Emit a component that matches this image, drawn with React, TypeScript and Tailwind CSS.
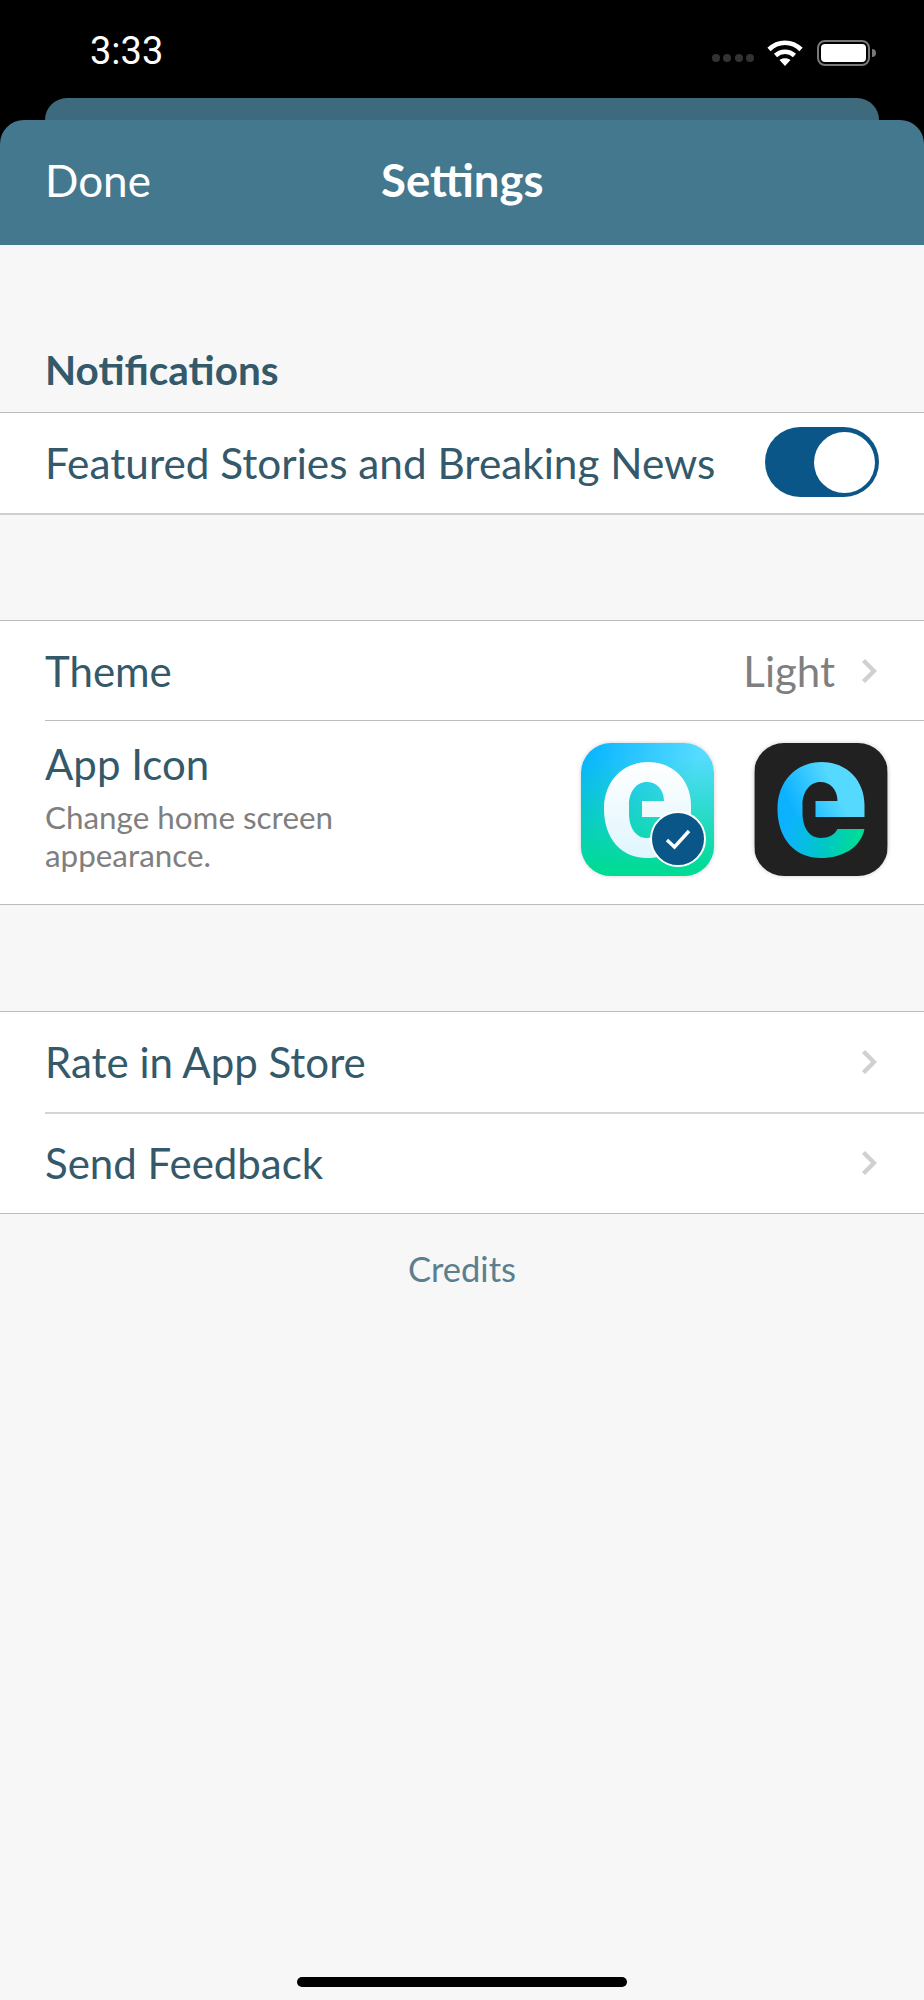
const lato = "font-['Lato',sans-serif]";

const LETTER =
  "M110 74 L61 74 L61 58 L83 58 C83 46 75 39 66 39 C55 39 48 49 48 62 L48 70 C48 85 55 95 66 95 C74 95 80 92 83 86 L110 86 C106 105 88 115 66 115 C40 115 23 95 23 66 C23 38 42 19 67 19 C93 19 110 38 110 62 Z";

function StatusIcons() {
  return (
    <div className="flex items-center pt-[3px]">
      <div className="mt-[11px] flex gap-[3.5px]">
        <span className="h-2 w-2 rounded-full bg-[#333]" />
        <span className="h-2 w-2 rounded-full bg-[#333]" />
        <span className="h-2 w-2 rounded-full bg-[#333]" />
        <span className="h-2 w-2 rounded-full bg-[#333]" />
      </div>
      <svg className="ml-[13px]" width="36" height="27" viewBox="0 0 36 27" fill="none">
        <path d="M2 10.5 C11 1.5 25 1.5 34 10.5" stroke="#fff" strokeWidth="4.6" />
        <path d="M8.5 16.5 C14 11.5 22 11.5 27.5 16.5" stroke="#fff" strokeWidth="4.6" />
        <path d="M12.5 21 C15.5 18.6 20.5 18.6 23.5 21 L18 27 Z" fill="#fff" />
      </svg>
      <div className="ml-[14px] flex h-[26px] w-[53px] items-center rounded-[8px] border-2 border-[#777] p-[2px]">
        <div className="h-full w-full rounded-[4px] bg-white" />
      </div>
      <div className="ml-[2px] h-2 w-1 rounded-r-full bg-[#777]" />
    </div>
  );
}

function LightIcon() {
  return (
    <div className="relative h-[133px] w-[133px]">
      <svg className="rounded-[30px] shadow-[0_0_4px_rgba(0,0,0,0.2)]" width="133" height="133" viewBox="0 0 133 133">
        <defs>
          <linearGradient id="lightSky" x1="0" y1="0" x2="1" y2="0.25">
            <stop offset="0" stopColor="#03b2ff" />
            <stop offset="0.85" stopColor="#55dbff" />
          </linearGradient>
          <linearGradient id="lightSea" x1="0" y1="0.1" x2="0" y2="0.95">
            <stop offset="0" stopColor="#00db96" stopOpacity="0" />
            <stop offset="1" stopColor="#00db96" />
          </linearGradient>
          <linearGradient id="lightLetter" x1="0" y1="0" x2="0" y2="1">
            <stop offset="0" stopColor="#ffffff" />
            <stop offset="1" stopColor="#dff5fe" />
          </linearGradient>
        </defs>
        <rect width="133" height="133" fill="url(#lightSky)" />
        <rect width="133" height="133" fill="url(#lightSea)" />
        <path d={LETTER} fill="url(#lightLetter)" />
      </svg>
      {/* selected badge */}
      <div className="absolute left-[69px] top-[68px] flex h-[56px] w-[56px] items-center justify-center rounded-full border-2 border-white bg-[#0a5689]">
        <svg width="28" height="24" viewBox="0 0 28 24" fill="none">
          <path d="M3 13 L10.5 20 L25 4" stroke="#fff" strokeWidth="3.4" />
        </svg>
      </div>
    </div>
  );
}

function DarkIcon() {
  return (
    <svg className="rounded-[30px] shadow-[0_0_4px_rgba(0,0,0,0.2)]" width="134" height="133" viewBox="0 0 133 133">
      <defs>
        {/* the bar and bowl fade to light blue, the lower hook fades to green */}
        <linearGradient id="darkUpper" x1="0.05" y1="0.55" x2="0.85" y2="0.15">
          <stop offset="0.15" stopColor="#0db2ff" />
          <stop offset="0.75" stopColor="#55d9ff" />
        </linearGradient>
        <linearGradient id="darkLower" x1="0.05" y1="0.5" x2="1" y2="0.75">
          <stop offset="0.1" stopColor="#0db2ff" />
          <stop offset="0.55" stopColor="#00c6c8" />
          <stop offset="0.95" stopColor="#00dc96" />
        </linearGradient>
        <clipPath id="upperHalf">
          <rect width="133" height="74" />
        </clipPath>
        <clipPath id="lowerHalf">
          <rect y="74" width="133" height="59" />
        </clipPath>
      </defs>
      <rect width="133" height="133" fill="#212121" />
      <path d={LETTER} fill="url(#darkUpper)" clipPath="url(#upperHalf)" />
      <path d={LETTER} fill="url(#darkLower)" clipPath="url(#lowerHalf)" />
    </svg>
  );
}

function Chevron() {
  return (
    <svg width="16" height="26" viewBox="0 0 16 26" fill="none">
      <path d="M2.5 2.5 L13 13 L2.5 23.5" stroke="#d0d0d0" strokeWidth="4.4" />
    </svg>
  );
}

function LinkRow({ label, value }: { label: string; value?: string }) {
  return (
    <div className="flex h-full items-center justify-between pl-[45px] pr-[47px]">
      <span className="text-[42px] leading-none text-[#33596b]">{label}</span>
      <div className="flex items-center gap-[26px]">
        {value && <span className="text-[42px] leading-none text-[#7f7f7f]">{value}</span>}
        <Chevron />
      </div>
    </div>
  );
}

export default function App() {
  return (
    <div className={`${lato} flex h-[2000px] w-[924px] flex-col bg-[#f7f7f7]`}>
      {/* status bar + stacked sheet */}
      <div className="bg-black">
        <div className="flex h-[98px] items-start justify-between pl-[90px] pr-[48px] pt-[36px]">
          <span className="font-['Roboto',sans-serif] text-[38px] font-normal leading-[30px] text-white">3:33</span>
          <StatusIcons />
        </div>
        <div className="mx-[45px] h-[22px] rounded-t-[24px] bg-[#3e6a7e]" />
        <div className="relative flex h-[125px] items-center rounded-t-[24px] bg-[#44788f] pb-[6px] pl-[45px]">
          <span className="text-[44px] leading-none text-white">Done</span>
          <span className="absolute left-[381px] text-[45.5px] font-bold leading-none text-white">Settings</span>
        </div>
      </div>

      <div className="flex h-[167px] items-end pb-[22px] pl-[45px]">
        <span className="text-[40.5px] font-bold leading-none text-[#33596b]">Notifications</span>
      </div>

      <section className="border-b-2 border-t border-b-[#cfcfcf] border-t-[#bcbcbc] bg-white">
        <div className="flex h-[100px] items-center justify-between pl-[45px] pr-[45px]">
          <span className="text-[42.3px] leading-none text-[#33596b]">Featured Stories and Breaking News</span>
          <div className="mb-[2px] flex h-[70px] w-[114px] items-center justify-end rounded-full bg-[#0a5689] pr-[4px]">
            <div className="h-[61px] w-[61px] rounded-full bg-white" />
          </div>
        </div>
      </section>

      <section className="mt-[105px] border-y border-[#bcbcbc] bg-white">
        <div className="h-[99px]">
          <LinkRow label="Theme" value="Light" />
        </div>
        <div className="ml-[45px] h-px bg-[#bcbcbc]" />
        <div className="flex h-[183px] items-center justify-between pb-[6px] pl-[45px] pr-[36px]">
          <div className="w-[320px] pb-[4px]">
            <div className="text-[42px] leading-[46px] text-[#33596b]">App Icon</div>
            <div className="mt-[11px] text-[31.4px] leading-[38px] text-[#7f7f7f]">Change home screen appearance.</div>
          </div>
          <div className="flex gap-[40px]">
            <LightIcon />
            <DarkIcon />
          </div>
        </div>
      </section>

      <section className="mt-[106px] border-y border-[#bcbcbc] bg-white">
        <div className="h-[100px]">
          <LinkRow label="Rate in App Store" />
        </div>
        <div className="ml-[45px] h-[2px] bg-[#d4d4d4]" />
        <div className="h-[99px] pb-[2px]">
          <LinkRow label="Send Feedback" />
        </div>
      </section>

      <div className="mt-[38px] text-center text-[34.5px] leading-none text-[#5b7f8f]">Credits</div>

      <div className="mt-auto flex justify-center pb-[13px]">
        <div className="h-[10px] w-[330px] rounded-full bg-black" />
      </div>
    </div>
  );
}
